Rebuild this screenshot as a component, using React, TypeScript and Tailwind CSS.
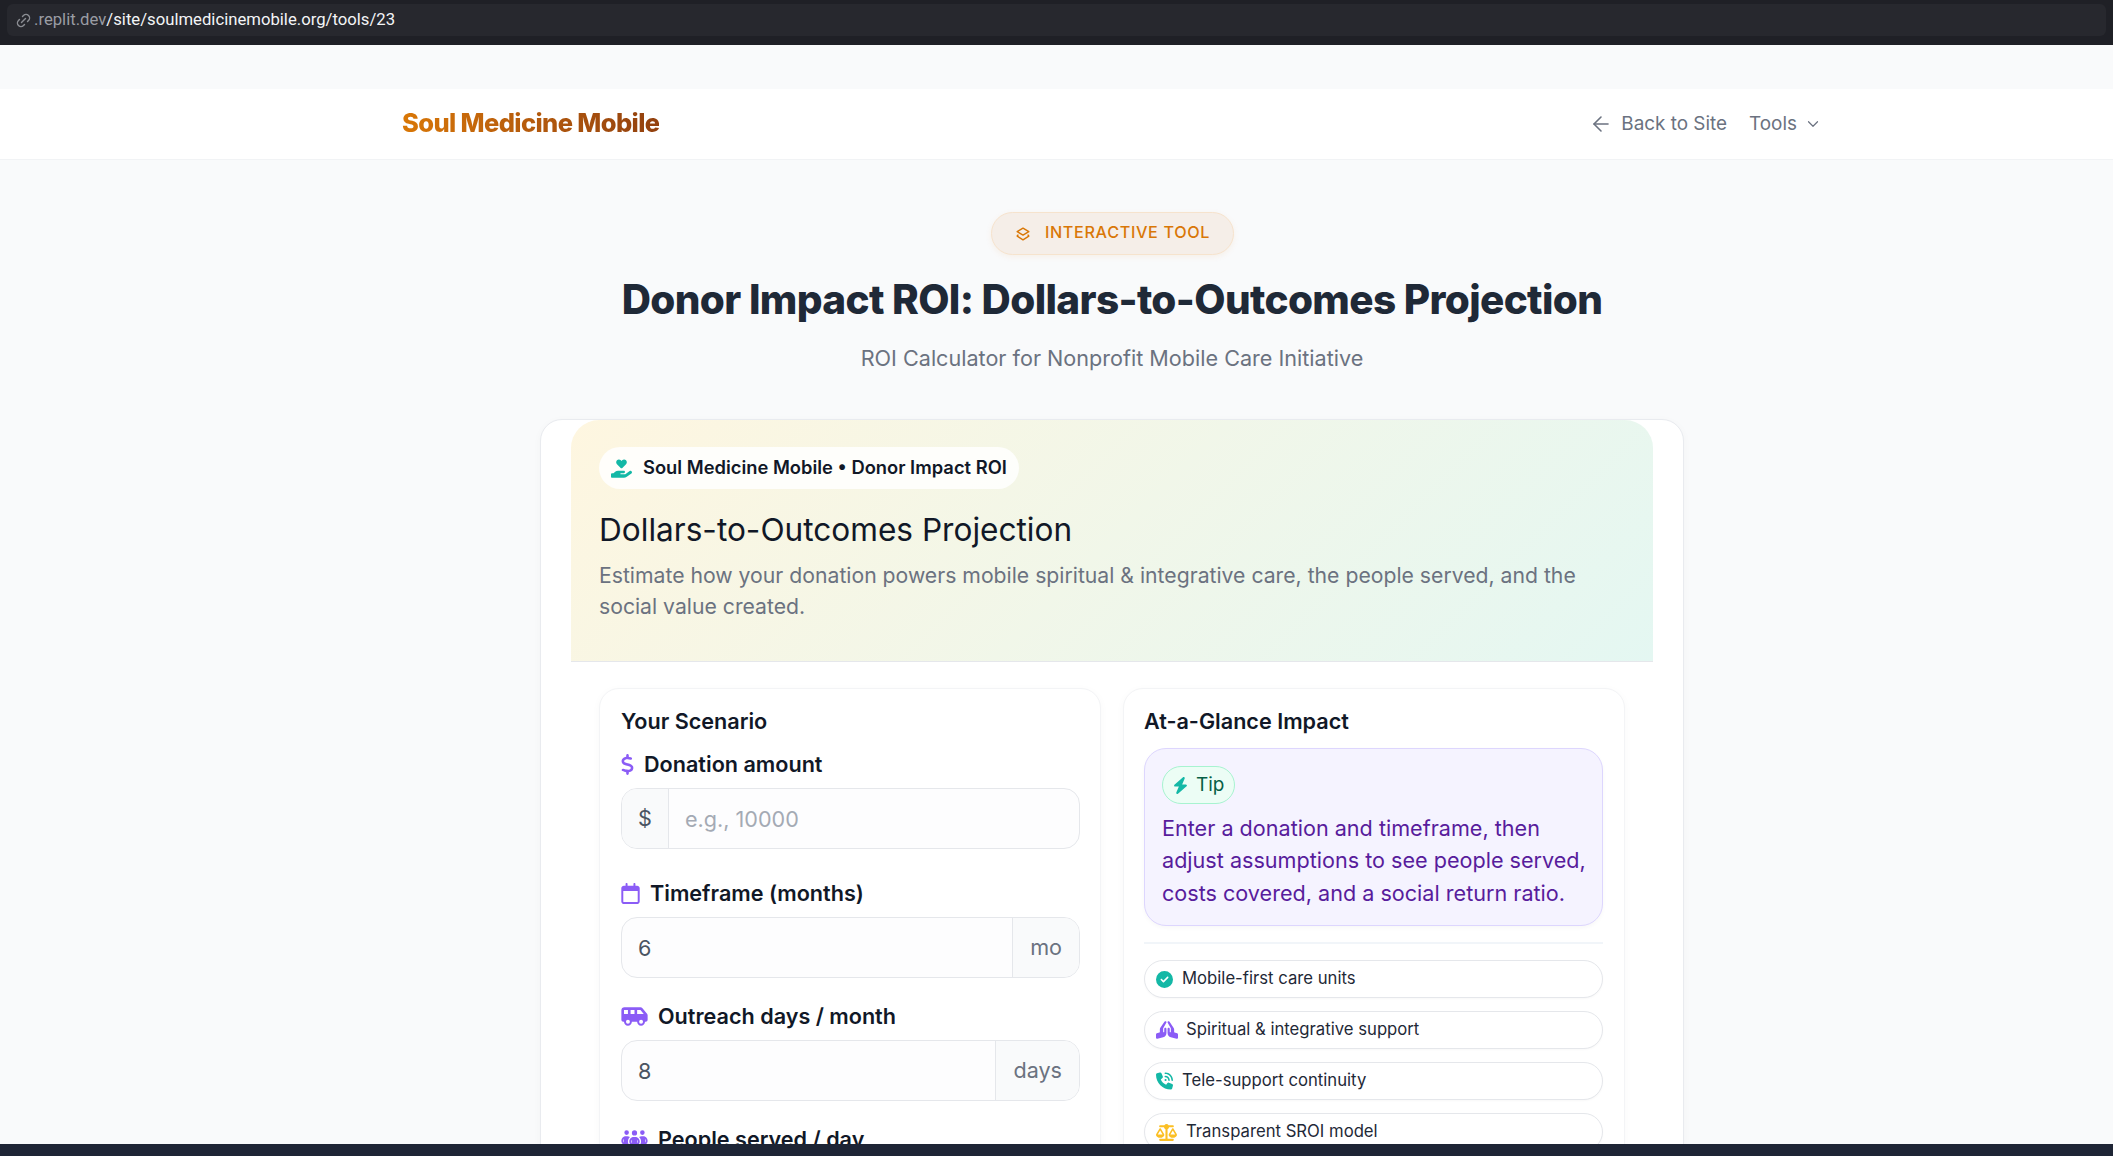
import { ArrowLeft, ChevronDown, Link2 } from "lucide-react";
import type { ReactNode } from "react";
import {
  FaBolt,
  FaCircleCheck,
  FaDollarSign,
  FaHandHoldingHeart,
  FaHandsPraying,
  FaPeopleGroup,
  FaPhoneVolume,
  FaRegCalendar,
  FaScaleBalanced,
  FaVanShuttle,
} from "react-icons/fa6";

function LayersIcon() {
  return (
    <svg viewBox="0 0 24 24" className="mt-[3px] h-[14px] w-[14px] text-[#d97706]" fill="none" stroke="currentColor" strokeWidth={2.4} strokeLinejoin="round">
      <path d="M12 2 22 8l-10 6L2 8z" />
      <path d="M4 13l-2 2.5L12 22l10-6.500L20 13" />
    </svg>
  );
}

function Field({
  icon,
  label,
  gap,
  prefix,
  suffix,
  value,
  placeholder,
}: {
  icon: ReactNode;
  label: string;
  gap: string;
  prefix?: string;
  suffix?: string;
  value?: string;
  placeholder?: string;
}) {
  return (
    <div>
      <div className={`flex h-[27px] items-center ${gap} text-[21.600px] font-semibold leading-none text-[#111827]`}>
        {icon}
        <span>{label}</span>
      </div>
      <div className="mt-[10px] flex h-[61px] overflow-hidden rounded-[16px] border border-[#e5e7eb] bg-[#fdfdfe] text-[21.600px] text-[#4b5563]">
        {prefix && (
          <div className="flex w-[47px] items-center justify-center border-r border-[#e5e7eb] bg-[#f9fafb]">{prefix}</div>
        )}
        <input
          readOnly
          value={value}
          placeholder={placeholder}
          className="h-full min-w-0 flex-1 bg-transparent px-4 text-[21.600px] text-[#4b5563] outline-none placeholder:text-[#a4aab4]"
        />
        {suffix && (
          <div className="flex items-center border-l border-[#e5e7eb] bg-[#f9fafb] px-[17px] text-[#6b7280]">{suffix}</div>
        )}
      </div>
    </div>
  );
}

function Feature({ icon, label, gap }: { icon: ReactNode; label: string; gap: string }) {
  return (
    <div className={`flex h-[38px] items-center ${gap} rounded-full border border-[#e5e7eb] bg-white pl-[11px] text-[16.700px] text-[#1f2937] shadow-[0_1px_2px_rgba(0,0,0,0.03)]`}>
      {icon}
      <span>{label}</span>
    </div>
  );
}

export default function App() {
  return (
    <div className="flex h-[1156px] flex-col overflow-hidden bg-[#f9fafb] font-['Inter',sans-serif]">
      {/* browser url strip */}
      <div className="h-[45px] shrink-0 bg-[#1f2026] px-[7px] pt-1">
        <div className="flex h-8 items-center gap-[2px] rounded-md bg-[#27282e] pl-2 font-['Roboto',sans-serif] text-[16.700px]">
          <Link2 className="h-[17px] w-[17px] -rotate-45 text-[#8b8d93]" />
          <span className="text-[#9a9ca3]">.replit.dev</span>
          <span className="-ml-[2px] text-[#f3f4f6]">/site/soulmedicinemobile.org/tools/23</span>
        </div>
      </div>

      {/* page is wider than the window, so it sits off-centre and gets clipped on the right */}
      <div className="min-h-0 flex-1 overflow-hidden pt-[44px]">
        <div className="w-[2224px]">
          <header className="h-[71px] border-b border-[#f1f3f5] bg-white">
            <div className="mx-auto flex h-full w-[1420px] items-center justify-between">
              <div className="bg-gradient-to-r from-[#d97706] to-[#92400e] bg-clip-text pb-[2px] text-[25.500px] font-extrabold tracking-[-0.62px] text-transparent">
                Soul Medicine Mobile
              </div>
              <nav className="flex items-center pt-[1px] text-[18.900px] text-[#6b7280]">
                <ArrowLeft className="mr-[8px] h-6 w-6" strokeWidth={1.6} />
                <span>Back to Site</span>
                <span className="ml-[22px]">Tools</span>
                <ChevronDown className="ml-[7px] h-[18px] w-[18px]" strokeWidth={1.6} />
              </nav>
            </div>
          </header>

          <main className="flex flex-col items-center pt-[52px]">
            <div className="flex h-[43px] w-[243px] items-center justify-center gap-[15px] rounded-full border border-[#f6e3cd] bg-[#f5eee8] pb-[2px] pl-[2px] text-[16.200px] font-medium tracking-[0.65px] text-[#d97706] shadow-[0_2px_6px_rgba(217,119,6,0.08)]">
              <LayersIcon />
              <span>INTERACTIVE TOOL</span>
            </div>
            <h1 className="mt-[20px] text-[40.500px] font-extrabold leading-[50px] tracking-[-0.64px] text-[#1f2937]">
              Donor Impact ROI: Dollars-to-Outcomes Projection
            </h1>
            <p className="mt-[17px] text-[21.600px] leading-[32px] text-[#6b7280]">ROI Calculator for Nonprofit Mobile Care Initiative</p>

            <section className="mt-[45px] w-[1144px] rounded-[22px] border border-[#e9ebef] bg-white px-[30px] shadow-[0_2px_8px_rgba(0,0,0,0.03)]">
              <div className="h-[242px] rounded-t-[28px] border-b border-[#e5e7eb] bg-[linear-gradient(135deg,#fef6e0,#e4f7f2)] px-[28px] pt-[27px]">
                <div className="inline-flex h-[42px] items-center gap-[11px] rounded-full bg-white/85 pl-[12px] pr-[12px] text-[18.350px] font-semibold text-[#111827]">
                  <FaHandHoldingHeart className="h-[21px] w-[21px] text-[#14b8a6]" />
                  <span>Soul Medicine Mobile • Donor Impact ROI</span>
                </div>
                <h2 className="mt-[19px] text-[31.600px] leading-[44px] text-[#111827]">Dollars-to-Outcomes Projection</h2>
                <p className="mt-[8px] text-[21.200px] leading-[31px] text-[#6b7280]">
                  Estimate how your donation powers mobile spiritual &amp; integrative care, the people served, and the social value created.
                </p>
              </div>

              <div className="grid grid-cols-2 gap-[22px] px-[28px] pt-[26px]">
                <div className="h-[520px] rounded-[20px] border border-[#f3f4f6] bg-white pl-[21px] pr-[20px] pt-[16px] shadow-[0_2px_8px_rgba(0,0,0,0.03)]">
                  <h3 className="text-[21.600px] font-semibold leading-[32px] text-[#111827]">Your Scenario</h3>
                  <div className="mt-[14px] flex flex-col gap-[25px]">
                    <div className="mb-[6px]">
                      <Field
                        icon={<FaDollarSign className="h-[21px] w-[13px] text-[#8b5cf6]" />}
                        gap="gap-[10px]"
                        label="Donation amount"
                        prefix="$"
                        placeholder="e.g., 10000"
                      />
                    </div>
                    <Field
                      icon={<FaRegCalendar className="h-[21px] w-[19px] text-[#8b5cf6]" />}
                      gap="gap-[10px]"
                      label="Timeframe (months)"
                      suffix="mo"
                      value="6"
                    />
                    <Field
                      icon={<FaVanShuttle className="h-[21px] w-[27px] text-[#8b5cf6]" />}
                      gap="gap-[10px]"
                      label="Outreach days / month"
                      suffix="days"
                      value="8"
                    />
                    <Field
                      icon={<FaPeopleGroup className="h-[21px] w-[27px] text-[#8b5cf6]" />}
                      gap="gap-[10px]"
                      label="People served / day"
                      suffix="people"
                      value="25"
                    />
                  </div>
                </div>

                <div className="h-[520px] rounded-[20px] border border-[#f3f4f6] bg-white pl-[20px] pr-[21px] pt-[16px] shadow-[0_2px_8px_rgba(0,0,0,0.03)]">
                  <h3 className="text-[21.600px] font-semibold leading-[32px] text-[#111827]">At-a-Glance Impact</h3>
                  <div className="mt-[11px] h-[178px] rounded-[22px] border border-[#ddd6fe] bg-[#f5f3ff] pl-[17px] pr-[14px] pt-[17px] shadow-[0_2px_4px_rgba(0,0,0,0.03)]">
                    <div className="inline-flex h-[38px] items-center gap-[8px] rounded-full border border-[#a7f3d0] bg-[#ecfdf5] px-[10px] text-[18.900px] text-[#065f46]">
                      <FaBolt className="h-[19px] w-[15px] text-[#14b8a6]" />
                      <span>Tip</span>
                    </div>
                    <p className="mt-[8px] text-[21.600px] leading-[32.400px] text-[#581c9c]">
                      Enter a donation and timeframe, then adjust assumptions to see people served, costs covered, and a social return ratio.
                    </p>
                  </div>
                  <div className="mt-[16px] h-[2px] bg-[#f1f5f9]" />
                  <div className="mt-[16px] flex flex-col gap-[13px]">
                    <Feature
                      icon={<FaCircleCheck className="h-[17px] w-[17px] text-[#14b8a6]" />}
                      gap="gap-[9px]"
                      label="Mobile-first care units"
                    />
                    <Feature
                      icon={<FaHandsPraying className="h-[18px] w-[22px] text-[#8b5cf6]" />}
                      gap="gap-[8px]"
                      label="Spiritual & integrative support"
                    />
                    <Feature
                      icon={<FaPhoneVolume className="h-[18px] w-[17px] text-[#14b8a6]" />}
                      gap="gap-[9px]"
                      label="Tele-support continuity"
                    />
                    <Feature
                      icon={<FaScaleBalanced className="h-[17px] w-[21px] text-[#fbbf24]" />}
                      gap="gap-[9px]"
                      label="Transparent SROI model"
                    />
                  </div>
                </div>
              </div>
            </section>
          </main>
        </div>
      </div>

      <div className="h-[12px] shrink-0 bg-[#1e2535]" />
    </div>
  );
}
